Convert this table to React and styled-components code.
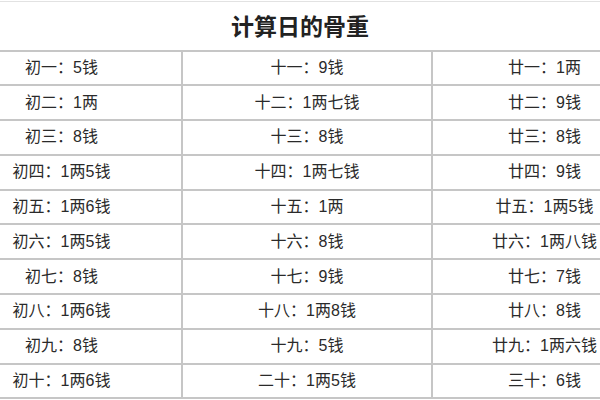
import React from 'react';
import styled, { createGlobalStyle } from 'styled-components';

const rows = [
  ['初一：5钱', '十一：9钱', '廿一：1两'],
  ['初二：1两', '十二：1两七钱', '廿二：9钱'],
  ['初三：8钱', '十三：8钱', '廿三：8钱'],
  ['初四：1两5钱', '十四：1两七钱', '廿四：9钱'],
  ['初五：1两6钱', '十五：1两', '廿五：1两5钱'],
  ['初六：1两5钱', '十六：8钱', '廿六：1两八钱'],
  ['初七：8钱', '十七：9钱', '廿七：7钱'],
  ['初八：1两6钱', '十八：1两8钱', '廿八：8钱'],
  ['初九：8钱', '十九：5钱', '廿九：1两六钱'],
  ['初十：1两6钱', '二十：1两5钱', '三十：6钱'],
];

const App = () => {
  return (
    <Page>
      <GlobalStyle />
      <Table>
        <colgroup>
          <Col $w={240} />
          <Col $w={250} />
          <Col $w={224} />
        </colgroup>
        <thead>
          <tr>
            <TitleCell colSpan={3}>计算日的骨重</TitleCell>
          </tr>
        </thead>
        <tbody>
          {rows.map((row, i) => (
            <Row key={i}>
              {row.map((text, j) => (
                <Cell key={j} $last={j === 2}>{text}</Cell>
              ))}
            </Row>
          ))}
        </tbody>
      </Table>
    </Page>
  );
};

const GlobalStyle = createGlobalStyle`
  body {
    margin: 0;
    background: #ffffff;
  }
`;

const Page = styled.div`
  width: 600px;
  height: 400px;
  overflow: hidden;
  padding-top: 1px;
  box-sizing: border-box;
  background: #ffffff;
`;

const Table = styled.table`
  margin-left: -58px;
  width: 714px;
  border-collapse: collapse;
  table-layout: fixed;
  font-family: "Liberation Sans", "Noto Sans CJK SC", sans-serif;
  color: #333333;
`;

const Col = styled.col`
  width: ${p => p.$w}px;
`;

const TitleCell = styled.th`
  height: 49px;
  padding: 0 0 2px 2px;
  border-top: 1px solid #e2e2e2;
  border-bottom: 2px solid #c6c6c6;
  text-align: center;
  box-sizing: border-box;
  font-family: "Noto Sans CJK SC", sans-serif;
  font-size: 23px;
  font-weight: bold;
  color: #222222;
`;

const Row = styled.tr`
  height: 34.8px;
`;

const Cell = styled.td`
  padding: 0;
  height: 32.8px;
  border-bottom: 2px solid #c6c6c6;
  border-right: ${p => (p.$last ? 'none' : '2px solid #c6c6c6')};
  text-align: center;
  font-size: 16px;
  white-space: nowrap;
  line-height: 1;
  color: #2a2a2a;
`;

export default App;
